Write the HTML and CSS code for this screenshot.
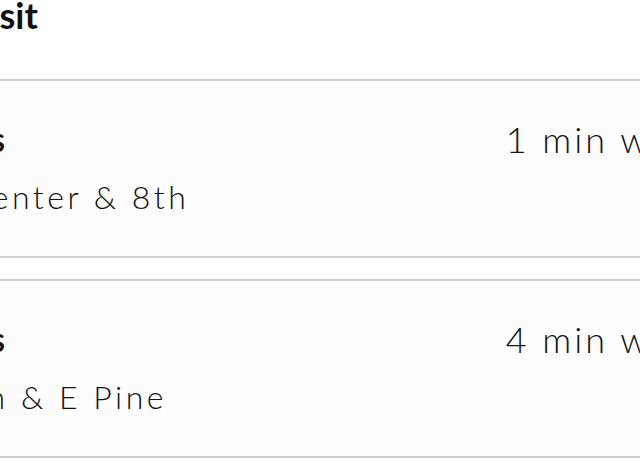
FILE: index.html
```html
<!DOCTYPE html>
<html lang="en">

<head>
    <title>Nearby Transit</title>
    <link rel="stylesheet" href="styles.css">
</head>

<body>
    <div class="screen">
        <h1 class="section-title">Nearby Transit</h1>

        <div class="stop-list">
            <div class="stop-card">
                <div class="stop-info">
                    <div class="stop-routes">Metro Buses</div>
                    <div class="stop-name">Eastlake Center &amp; 8th</div>
                </div>
                <div class="stop-walk">1 min walk</div>
            </div>

            <div class="stop-card">
                <div class="stop-info">
                    <div class="stop-routes">Metro Buses</div>
                    <div class="stop-name">E. Boylston &amp; E Pine</div>
                </div>
                <div class="stop-walk">4 min walk</div>
            </div>
        </div>
    </div>
</body>

</html>
```

FILE: styles.css
```css
body {
    margin: 0;
    padding: 0;
    background-color: white;
    font-family: Lato, "Liberation Sans", sans-serif;
    color: #111;
    overflow: hidden;
}

.screen {
    width: 922px;
    margin-left: -214px;
    padding: 0 20px;
}

.section-title {
    margin: 0 0 49px;
    font-size: 36px;
    font-weight: 700;
    line-height: 30px;
}

.stop-list {
    display: flex;
    flex-direction: column;
    gap: 21px;
}

.stop-card {
    display: flex;
    align-items: flex-start;
    padding: 38px 24px 39px 7px;
    background-color: #fdfdfd;
    border: 2px solid #cfcfcf;
    border-radius: 6px;
}

.stop-info {
    flex: 1;
}

.stop-routes {
    font-size: 34px;
    font-weight: 600;
    line-height: 40px;
}

.stop-name {
    margin-top: 18px;
    font-size: 32px;
    font-weight: 300;
    letter-spacing: 3.5px;
    line-height: 40px;
}

.stop-walk {
    font-size: 36px;
    font-weight: 300;
    letter-spacing: 3px;
    line-height: 40px;
}
```
